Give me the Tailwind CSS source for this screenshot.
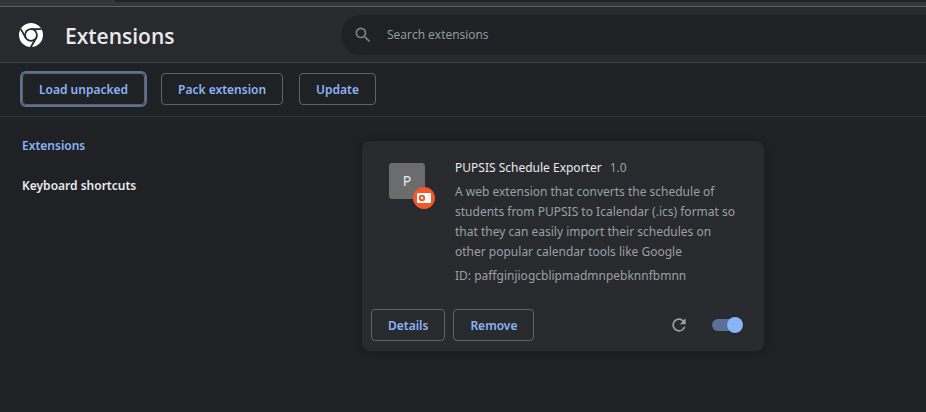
<!DOCTYPE html>
<html lang="en">
<head>
<meta charset="utf-8">
<meta name="viewport" content="width=device-width, initial-scale=1">
<title>Extensions</title>
<script src="https://cdn.jsdelivr.net/npm/@tailwindcss/browser@4"></script>
</head>
<body class="flex min-h-screen flex-col bg-[#202124] font-['Noto_Sans','Open_Sans',sans-serif] text-[12px] leading-5 text-[#e8eaed]">
  <div class="h-[7px] border-b border-[#5f6064] bg-[#35363a]">
    <div class="ml-[115px] h-[2px] rounded-bl-full bg-[#202124]"></div>
  </div>

  <header class="flex h-14 items-center border-b border-[#414246] bg-[#292a2d] pl-[19px]">
    <svg class="size-6 shrink-0" viewBox="0 0 24 24" aria-hidden="true">
      <circle cx="12" cy="12" r="12" fill="#fff"/>
      <circle cx="12" cy="12" r="6.8" fill="#292a2d"/>
      <g stroke="#292a2d" stroke-width="1.8" fill="none">
        <path d="M12 6.1H22.5"/>
        <path d="M12 6.1H22.5" transform="rotate(120 12 12)"/>
        <path d="M12 6.1H22.5" transform="rotate(240 12 12)"/>
      </g>
      <circle cx="12" cy="12" r="5" fill="#fff"/>
    </svg>
    <h1 class="ml-[22px] w-[276px] shrink-0 pt-[2px] font-['Open_Sans',sans-serif] text-[21px] leading-8 font-semibold">Extensions</h1>
    <div class="flex h-10 min-w-0 flex-1 items-center rounded-l-full bg-[#202124] pl-3">
      <svg class="size-5 shrink-0 text-[#7d8186]" viewBox="0 0 24 24" fill="currentColor" aria-hidden="true"><path d="M15.5 14h-.79l-.28-.27A6.471 6.471 0 0 0 16 9.5 6.5 6.5 0 1 0 9.5 16c1.61 0 3.09-.59 4.23-1.57l.27.28v.79l5 4.99L20.49 19l-4.99-5zm-6 0C7.01 14 5 11.99 5 9.5S7.01 5 9.5 5 14 7.01 14 9.5 11.99 14 9.5 14z"/></svg>
      <input type="search" aria-label="Search extensions" placeholder="Search extensions" class="ml-[14px] min-w-0 flex-1 bg-transparent font-['Open_Sans',sans-serif] outline-none placeholder:text-[#9aa0a6]">
    </div>
  </header>

  <div class="flex items-center gap-4 border-b border-[#35363a] px-[22px] pt-[10px] pb-[11px] font-semibold text-[#8ab4f8]">
    <button class="h-8 rounded border border-[#5f6368] px-4 pt-px ring-2 ring-[#5b7096]">Load unpacked</button>
    <button class="h-8 rounded border border-[#5f6368] px-4 pt-px">Pack extension</button>
    <button class="h-8 rounded border border-[#5f6368] px-4 pt-px">Update</button>
  </div>

  <div class="flex flex-1">
    <nav class="flex w-[200px] shrink-0 flex-col gap-5 pt-[19px] pl-[22px] font-semibold">
      <a href="#extensions" class="text-[#8ab4f8]">Extensions</a>
      <a href="#shortcuts">Keyboard shortcuts</a>
    </nav>
    <main class="flex flex-1 items-start justify-center pt-6">
      <article class="w-full max-w-[402px] rounded-lg bg-[#292a2d] shadow-[0_1px_6px_2px_rgba(0,0,0,0.15)]">
        <div class="flex pt-[17px] pr-5 pl-[27px]">
          <div class="relative mt-[5px] flex size-9 shrink-0 items-center justify-center rounded-[3px] bg-[#6c6c6c] text-[14px]">P
            <svg class="absolute -right-[10px] -bottom-[10px] size-[22px]" viewBox="0 0 22 22" aria-hidden="true">
              <circle cx="11" cy="11" r="11" fill="#f1592a"/>
              <rect x="4" y="6" width="14" height="10" rx="1" fill="#fff"/>
              <circle cx="9" cy="11" r="2.2" fill="#fff" stroke="#f1592a" stroke-width="2"/>
              <circle cx="15.8" cy="8.2" r=".5" fill="#f1592a"/>
            </svg>
          </div>
          <div class="ml-[30px] text-[#9aa0a6]">
            <div class="flex gap-2"><h2 class="text-[#e8eaed]">PUPSIS Schedule Exporter</h2><span>1.0</span></div>
            <p class="mt-1">A web extension that converts the schedule of students from PUPSIS to Icalendar (.ics) format so that they can easily import their schedules on other popular calendar tools like Google</p>
            <p class="mt-1">ID: paffginjiogcblipmadmnpebknnfbmnn</p>
          </div>
        </div>
        <div class="mt-[23px] flex items-center gap-2 pr-5 pb-[10px] pl-[9px]">
          <button class="h-8 rounded border border-[#5f6368] px-4 pt-px font-semibold text-[#8ab4f8]">Details</button>
          <button class="h-8 rounded border border-[#5f6368] px-4 pt-px font-semibold text-[#8ab4f8]">Remove</button>
          <button class="ml-auto" aria-label="Reload">
            <svg class="size-5 text-[#9aa0a6]" viewBox="0 0 24 24" fill="currentColor" aria-hidden="true"><path d="M17.65 6.35A7.958 7.958 0 0 0 12 4a8 8 0 1 0 7.73 10h-2.08A5.99 5.99 0 0 1 12 18a6 6 0 1 1 0-12c1.66 0 3.14.69 4.22 1.78L13 11h7V4l-2.35 2.35z"/></svg>
          </button>
          <label class="relative ml-[15px] flex h-4 w-[32px] items-center">
            <input type="checkbox" role="switch" checked aria-label="Enable PUPSIS Schedule Exporter" class="peer absolute inset-0 appearance-none">
            <span class="h-3 w-7 rounded-full bg-[#5f6368] peer-checked:bg-[#5b7096]"></span>
            <span class="pointer-events-none absolute left-0 size-4 rounded-full bg-[#9aa0a6] shadow peer-checked:left-[15px] peer-checked:bg-[#8ab4f8]"></span>
          </label>
        </div>
      </article>
    </main>
  </div>
</body>
</html>
